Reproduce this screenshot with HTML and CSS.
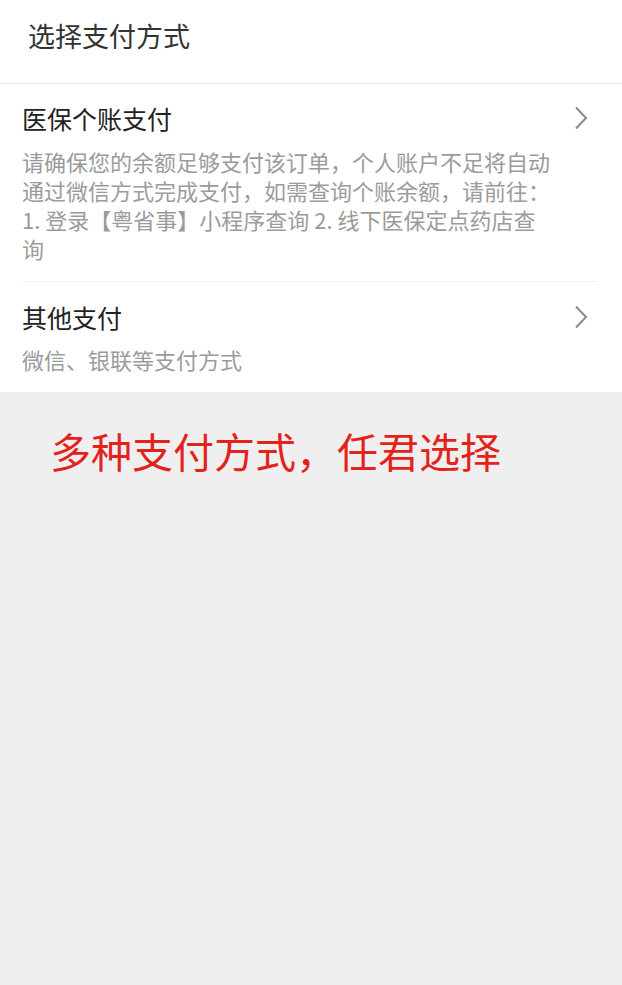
FILE: index.html
```html
<!DOCTYPE html>
<html lang="zh-CN">
<head>
<meta charset="utf-8">
<title>选择支付方式</title>
<link rel="stylesheet" href="styles.css">
</head>
<body>
<header class="header">
  <h1 class="header-title">选择支付方式</h1>
</header>
<section class="card">
  <div class="item item-first">
    <div class="item-title">医保个账支付</div>
    <svg class="chevron" width="14" height="24" viewBox="0 0 14 24" aria-hidden="true"><path d="M2 1.5 L12 12 L2 22.5" fill="none" stroke="#8a8a8a" stroke-width="2"/></svg>
    <p class="item-desc">请确保您的余额足够支付该订单，个人账户不足将自动通过微信方式完成支付，如需查询个账余额，请前往：1. 登录【粤省事】小程序查询 2. 线下医保定点药店查询</p>
  </div>
  <div class="item">
    <div class="item-title">其他支付</div>
    <svg class="chevron" width="14" height="24" viewBox="0 0 14 24" aria-hidden="true"><path d="M2 1.5 L12 12 L2 22.5" fill="none" stroke="#8a8a8a" stroke-width="2"/></svg>
    <p class="item-desc">微信、银联等支付方式</p>
  </div>
</section>
<section class="promo">
  <p class="promo-text">多种支付方式，任君选择</p>
</section>
</body>
</html>
```

FILE: styles.css
```css
html, body {
  margin: 0;
  padding: 0;
}
body {
  background: #efefef;
  font-family: "Noto Sans CJK SC", "Noto Sans", sans-serif;
  width: 622px;
  min-height: 985px;
}
.header {
  background: #ffffff;
  height: 83px;
  border-bottom: 1px solid #ececec;
  display: flex;
  align-items: center;
  padding-left: 28px;
  box-sizing: content-box;
}
.header-title {
  margin: 0;
  font-size: 27px;
  font-weight: 400;
  color: #333333;
  line-height: 34px;
  position: relative;
  top: -6px;
}
.card {
  background: #ffffff;
  padding: 0 25px 0 22px;
}
.item {
  display: grid;
  grid-template-columns: 1fr 14px;
  column-gap: 10px;
  align-items: center;
}
.item-first {
  padding: 17px 0 18px;
  border-bottom: 1px solid #f1f1f1;
}
.item + .item {
  padding: 18px 0 18px;
}
.item-title {
  font-size: 25px;
  line-height: 34px;
  color: #222222;
}
.chevron {
  justify-self: end;
  margin-right: 9px;
}
.item-desc {
  grid-column: 1 / -1;
  margin: 12px 0 0;
  max-width: 534px;
  font-size: 22px;
  line-height: 29px;
  color: #9b9b9b;
}
.item + .item .item-desc {
  margin-top: 11px;
}
.promo {
  padding: 33px 0 0 50px;
}
.promo-text {
  margin: 0;
  font-size: 41px;
  line-height: 50px;
  color: #e3231b;
}
```
